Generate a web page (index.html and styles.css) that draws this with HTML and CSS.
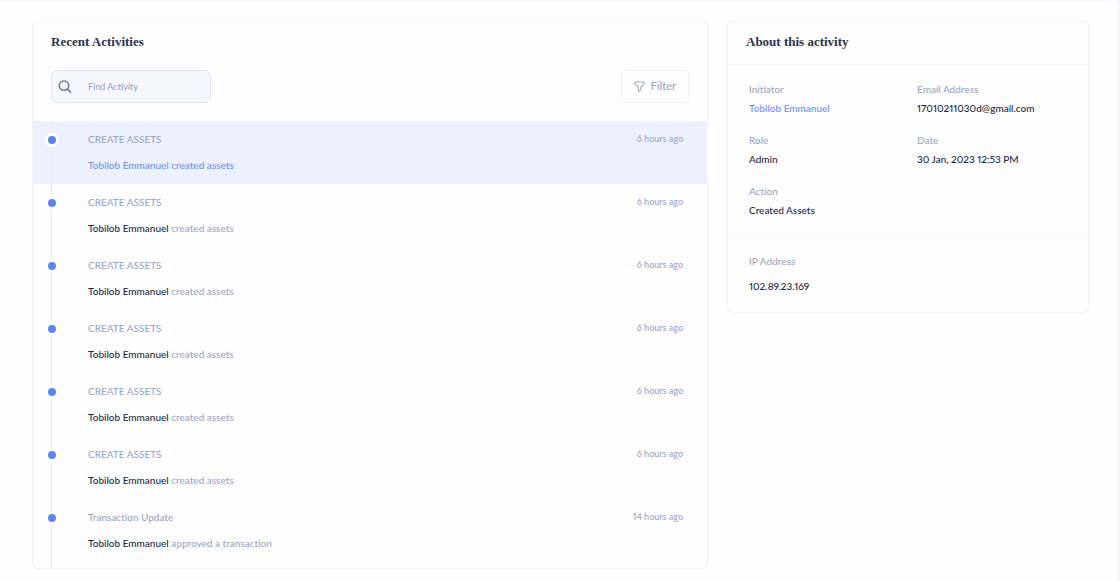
FILE: index.html
```html
<!DOCTYPE html>
<html lang="en">
<head>
<meta charset="utf-8">
<meta name="viewport" content="width=device-width, initial-scale=1">
<title>Recent Activities</title>
<link rel="stylesheet" href="styles.css">
</head>
<body>
<main class="page">
  <section class="card">
    <h2 class="card-title">Recent Activities</h2>
    <div class="toolbar">
      <label class="search">
        <svg class="search-icon" width="14" height="14" viewBox="0 0 14 14" fill="none" stroke="currentColor" stroke-width="1.5" stroke-linecap="round" aria-hidden="true"><circle cx="6" cy="5.6" r="4.7"/><path d="M9.5 9.1 12.6 12.2"/></svg>
        <input class="search-input" type="search" placeholder="Find Activity" aria-label="Find Activity">
      </label>
      <button class="filter" type="button">
        <svg width="11" height="11" viewBox="0 0 12 12" fill="none" stroke="currentColor" stroke-width="1.1" stroke-linejoin="round" aria-hidden="true"><path d="M1.5 1h9c.4 0 .6.3.6.7v.8c0 .4-.2.8-.5 1.1L7.8 6.5c-.3.3-.4.6-.4 1v1.8c0 .3-.2.6-.4.7l-1.2.9c-.4.3-1 0-1-.5V7.5c0-.4-.2-.8-.4-1.1L1.500 3.600c-.3-.3-.6-.7-.6-1.100v-.8c0-.4.2-.7.6-.7z"/></svg>
        <span class="filter-label">Filter</span>
      </button>
    </div>
    <ul class="timeline">
      <li class="entry active"><span class="rail"><span class="dot"></span></span><div class="entry-body"><p class="kind">CREATE ASSETS</p><p class="detail"><strong>Tobilob Emmanuel</strong> created assets</p></div><time class="time">6 hours ago</time></li>
      <li class="entry"><span class="rail"><span class="dot"></span></span><div class="entry-body"><p class="kind">CREATE ASSETS</p><p class="detail"><strong>Tobilob Emmanuel</strong> created assets</p></div><time class="time">6 hours ago</time></li>
      <li class="entry"><span class="rail"><span class="dot"></span></span><div class="entry-body"><p class="kind">CREATE ASSETS</p><p class="detail"><strong>Tobilob Emmanuel</strong> created assets</p></div><time class="time">6 hours ago</time></li>
      <li class="entry"><span class="rail"><span class="dot"></span></span><div class="entry-body"><p class="kind">CREATE ASSETS</p><p class="detail"><strong>Tobilob Emmanuel</strong> created assets</p></div><time class="time">6 hours ago</time></li>
      <li class="entry"><span class="rail"><span class="dot"></span></span><div class="entry-body"><p class="kind">CREATE ASSETS</p><p class="detail"><strong>Tobilob Emmanuel</strong> created assets</p></div><time class="time">6 hours ago</time></li>
      <li class="entry"><span class="rail"><span class="dot"></span></span><div class="entry-body"><p class="kind">CREATE ASSETS</p><p class="detail"><strong>Tobilob Emmanuel</strong> created assets</p></div><time class="time">6 hours ago</time></li>
      <li class="entry"><span class="rail"><span class="dot"></span></span><div class="entry-body"><p class="kind">Transaction Update</p><p class="detail"><strong>Tobilob Emmanuel</strong> approved a transaction</p></div><time class="time">14 hours ago</time></li>
    </ul>
  </section>
  <aside class="card">
    <h2 class="card-title ruled">About this activity</h2>
    <dl class="facts">
      <div><dt>Initiator</dt><dd><a class="person" href="#">Tobilob Emmanuel</a></dd></div>
      <div><dt>Email Address</dt><dd>17010211030d@gmail.com</dd></div>
      <div><dt>Role</dt><dd>Admin</dd></div>
      <div><dt>Date</dt><dd>30 Jan, 2023 12:53 PM</dd></div>
      <div><dt>Action</dt><dd>Created Assets</dd></div>
    </dl>
    <dl class="facts network">
      <div><dt>IP Address</dt><dd>102.89.23.169</dd></div>
    </dl>
  </aside>
</main>
</body>
</html>
```
FILE: styles.css
```css
* { box-sizing: border-box; }
body {
  margin: 0;
  padding: 1px 3px 0 0;
  background: #f7f8fe;
  color: #1f2a41;
  font: 500 10px/16px Lato, "Liberation Sans", sans-serif;
  font-variant-numeric: proportional-nums;
  font-variant-ligatures: none;
}
h2, p, ul, dl, dd { margin: 0; padding: 0; }
.page {
  display: grid;
  grid-template-columns: 676fr 362fr;
  gap: 19px;
  align-items: start;
  min-height: calc(100vh - 1px);
  padding: 19px 28px 12px 32px;
  background: #fefeff;
  border-radius: 0 4px 0 0;
}
.card {
  background: #fefeff;
  border: 1px solid #f1f3fd;
  border-radius: 6px;
  overflow: hidden;
}
.card-title {
  padding: 11px 18px;
  font: 700 13px/20px "Liberation Serif", serif;
  color: #29344d;
}
.ruled { padding-bottom: 12px; border-bottom: 1px solid #f1f3fd; }
.toolbar {
  display: flex;
  justify-content: space-between;
  padding: 7px 18px 18px;
}
.search {
  display: flex;
  align-items: center;
  gap: 16px;
  width: 160px;
  height: 33px;
  padding: 0 6px;
  background: #f6f7fc;
  border: 1px solid #dde4fb;
  border-radius: 6px;
}
.search-icon { flex: none; color: #69748b; }
.search-input {
  flex: 1;
  min-width: 0;
  padding: 0;
  border: 0;
  outline: 0;
  background: none;
  color: inherit;
  font: 500 9px/16px Lato, "Liberation Sans", sans-serif;
}
.search-input::placeholder { color: #9ba6c2; opacity: 1; }
.filter {
  display: flex;
  align-items: center;
  gap: 6px;
  height: 33px;
  padding: 0 12px;
  background: none;
  border: 1px solid #f1f3fd;
  border-radius: 4px;
  color: #9ba6c2;
  font: 500 11px/16px Lato, "Liberation Sans", sans-serif;
}
.filter-label { padding-bottom: 2px; }
.timeline { list-style: none; padding: 0; }
.entry { display: flex; gap: 18px; min-height: 63px; padding-right: 24px; }
.entry:last-child { min-height: 69px; }
.active { background: #edf1fe; }
.rail {
  flex: none;
  width: 37px;
  padding-top: 12px;
  background: linear-gradient(#e8ebf6, #e8ebf6) center / 1px 100% no-repeat;
}
.dot {
  display: block;
  width: 14px;
  height: 14px;
  margin: 0 auto;
  background: #5d86ec;
  border: 3px solid #fefeff;
  border-radius: 50%;
}
.entry-body { flex: 1; padding-top: 10px; }
.kind { color: #9ba6c2; }
.detail { margin-top: 10px; color: #9ba6c2; }
.detail strong { color: #1f2a41; font-weight: 500; }
.active .detail, .active strong { color: #6c91f2; }
.time { padding-top: 10px; color: #9ba6c2; font-size: 9px; }
.facts {
  display: grid;
  grid-template-columns: 1fr 1fr;
  gap: 16px 18px;
  padding: 16px 21px 18px;
}
.facts dt { color: #9ba6c2; }
.facts dd { margin-top: 3px; }
.network { border-top: 1px solid #f1f3fd; }
.network dd { margin-top: 9px; }
.person { color: #6c91f2; text-decoration: none; }
```
